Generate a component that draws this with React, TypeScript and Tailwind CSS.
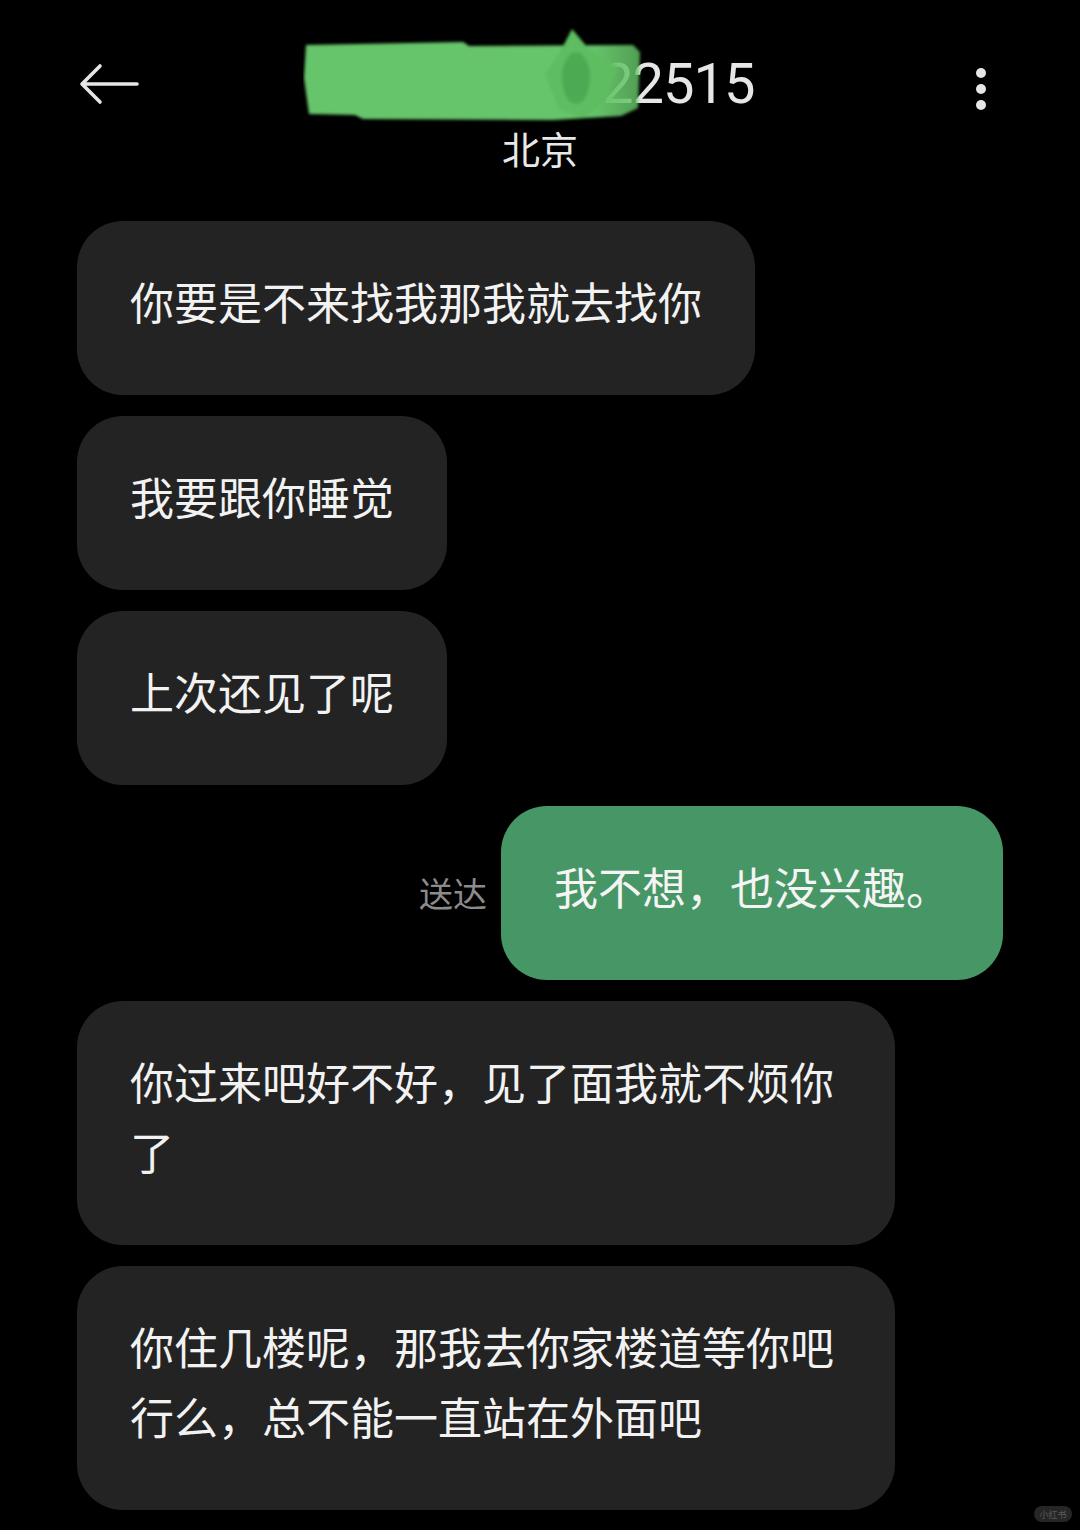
const font = { fontFamily: '"Noto Sans CJK SC", "Noto Sans", sans-serif' };

type Msg = { text: string; mine?: boolean };

const messages: Msg[] = [
  { text: '你要是不来找我那我就去找你' },
  { text: '我要跟你睡觉' },
  { text: '上次还见了呢' },
  { text: '我不想，也没兴趣。', mine: true },
  { text: '你过来吧好不好，见了面我就不烦你了' },
  { text: '你住几楼呢，那我去你家楼道等你吧行么，总不能一直站在外面吧' },
];

function BackArrow() {
  return (
    <svg width="60" height="42" viewBox="0 0 60 42" className="shrink-0">
      <path
        d="M58,21 H3 M21,3 L3,21 L21,39"
        fill="none"
        stroke="#e6e6e6"
        strokeWidth="3.6"
        strokeLinecap="round"
        strokeLinejoin="round"
      />
    </svg>
  );
}

function Scribble() {
  return (
    <svg width="340" height="95" viewBox="0 0 340 95" className="relative z-10 -mt-[18px] shrink-0">
      <defs>
        <filter id="soft" x="-5%" y="-10%" width="110%" height="120%">
          <feGaussianBlur stdDeviation="1.8" />
        </filter>
        <linearGradient id="fade" x1="0" y1="0" x2="1" y2="0">
          <stop offset="0.86" stopColor="#66c56a" stopOpacity="1" />
          <stop offset="1" stopColor="#66c56a" stopOpacity="0.8" />
        </linearGradient>
      </defs>
      <g filter="url(#soft)">
        <path
          d="M3,17 L160,14 L166,18 L330,17 L337,24 L335,80 L318,88 L250,92 L60,91 L52,87 L6,86 L1,50 Z"
          fill="url(#fade)"
        />
        <path d="M269,1 L285,20 L315,40 L300,76 L282,90 L256,82 L242,46 L258,22 Z" fill="#5dbd61" />
        <ellipse cx="273" cy="50" rx="14" ry="26" fill="#44a44b" opacity="0.7" />
      </g>
    </svg>
  );
}

function Bubble({ msg }: { msg: Msg }) {
  if (msg.mine) {
    return (
      <div className="flex items-center justify-end">
        <span className="mr-[14px] text-[34px] leading-none text-[#8b8b8b]">送达</span>
        <div className="max-w-[818px] rounded-[46px] bg-[#469666] px-[53px] pt-[45px] pb-[59px] text-[44px] leading-[70px] text-[#f4f4f4]">
          {msg.text}
        </div>
      </div>
    );
  }
  return (
    <div className="flex justify-start">
      <div className="max-w-[818px] rounded-[46px] bg-[#232323] px-[53px] pt-[45px] pb-[59px] text-[44px] leading-[70px] text-[#f2f2f2]">
        {msg.text}
      </div>
    </div>
  );
}

export default function App() {
  return (
    <div className="relative min-h-[1530px] overflow-hidden bg-black" style={font}>
      <div className="pt-[40px]">
        <div className="flex h-[88px] items-center pl-[79px] pr-[94px]">
          <BackArrow />
          <div className="ml-[164px] flex items-center">
            <Scribble />
            <span
              className="-ml-[41px] text-[56px] leading-none tracking-[-1px] text-[#e6e6e6]"
              style={{ fontFamily: 'Roboto, "Noto Sans", sans-serif' }}
            >
              22515
            </span>
          </div>
          <div className="ml-auto mt-[9px] flex flex-col items-center gap-[6px]">
            <span className="h-[10px] w-[10px] rounded-full bg-[#e6e6e6]" />
            <span className="h-[10px] w-[10px] rounded-full bg-[#e6e6e6]" />
            <span className="h-[10px] w-[10px] rounded-full bg-[#e6e6e6]" />
          </div>
        </div>
        <div className="flex justify-center">
          <span className="text-[38px] leading-[40px] text-[#e8e8e8]">北京</span>
        </div>
      </div>

      <div className="mt-[53px] flex flex-col gap-[21px] px-[77px]">
        {messages.map((m, i) => (
          <Bubble key={i} msg={m} />
        ))}
      </div>

      <div className="absolute bottom-[8px] right-[8px] flex h-[16px] w-[38px] items-center justify-center rounded-full bg-[#262626] text-[9px] leading-none text-[#5a5a5a]">
        小红书
      </div>
    </div>
  );
}
